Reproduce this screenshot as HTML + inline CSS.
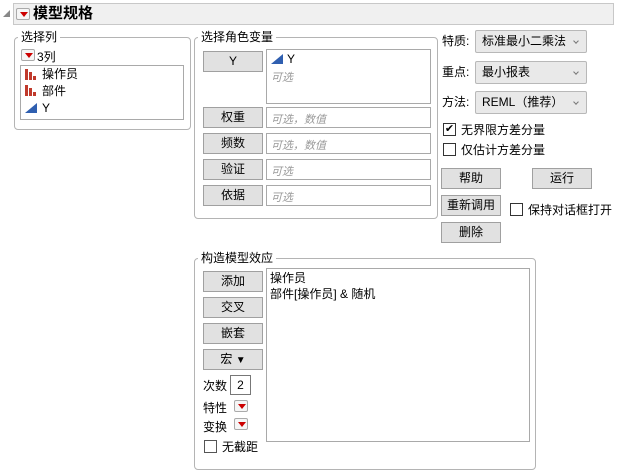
<!DOCTYPE html>
<html><head><meta charset="utf-8"><style>
*{box-sizing:border-box;margin:0;padding:0}
body{width:617px;height:471px;background:#fff;font-family:"Liberation Sans","Noto Sans CJK SC",sans-serif;font-size:12px;color:#000;position:relative;overflow:hidden}
.a{position:absolute}
.grp{position:absolute;border:1px solid #b4b4b4;border-radius:4px}
.gl{position:absolute;background:#fff;padding:0 3px;font-size:12px;line-height:14px}
.btn{position:absolute;background:#e1e1e1;border:1px solid #a0a0a0;text-align:center;font-size:12px;line-height:18px}
.box{position:absolute;background:#fff;border:1px solid #a9a9a9}
.ph{color:#9a9a9a;font-style:italic;font-size:11px;position:absolute;left:4px}
.dd{position:absolute;background:#e9e9e9;border:1px solid #b8b8b8;border-radius:2px;font-size:12px;line-height:21px;padding-left:6px}
.dd:after{content:"";position:absolute;right:8px;top:8px;width:3px;height:3px;border-right:1px solid #777;border-bottom:1px solid #777;transform:rotate(45deg)}
.cb{position:absolute;width:13px;height:13px;border:1px solid #333;background:#fff}
.rb{position:absolute;width:14px;height:12px;border:1px solid #aaa;border-radius:2px;background:#f6f6f6}
.rb:after{content:"";position:absolute;left:3px;top:3px;border-left:4px solid transparent;border-right:4px solid transparent;border-top:5px solid #c00}
.bar{position:absolute;width:3px;background:#c0392b;bottom:0}
</style></head><body>
<div class="a" style="left:3px;top:10px;width:0;height:0;border-left:7px solid transparent;border-bottom:7px solid #888"></div>
<div class="a" style="left:13px;top:3px;width:601px;height:22px;background:#f0f0f0;border:1px solid #c8c8c8"></div>
<div class="rb" style="left:16px;top:8px"></div>
<div class="a" style="left:33px;top:4px;font-size:15px;font-weight:bold;line-height:20px">模型规格</div>

<div class="grp" style="left:14px;top:37px;width:177px;height:93px"></div>
<div class="gl" style="left:18px;top:30px">选择列</div>
<div class="rb" style="left:21px;top:49px"></div>
<div class="a" style="left:37px;top:50px;line-height:14px">3列</div>
<div class="box" style="left:20px;top:65px;width:164px;height:55px"></div>
<div class="a" style="left:25px;top:68px;width:12px;height:12px"><div class="bar" style="left:0;height:11px"></div><div class="bar" style="left:4px;height:8px"></div><div class="bar" style="left:8px;height:4px"></div></div>
<div class="a" style="left:42px;top:67px;line-height:15px">操作员</div>
<div class="a" style="left:25px;top:84px;width:12px;height:12px"><div class="bar" style="left:0;height:11px"></div><div class="bar" style="left:4px;height:8px"></div><div class="bar" style="left:8px;height:4px"></div></div>
<div class="a" style="left:42px;top:84px;line-height:15px">部件</div>
<svg class="a" style="left:25px;top:103px" width="12" height="10"><polygon points="0,10 12,10 12,0" fill="#2f5fb0"/></svg>
<div class="a" style="left:42px;top:101px;line-height:15px">Y</div>

<div class="grp" style="left:194px;top:37px;width:244px;height:182px"></div>
<div class="gl" style="left:198px;top:30px">选择角色变量</div>
<div class="btn" style="left:203px;top:51px;width:60px;height:21px">Y</div>
<div class="box" style="left:266px;top:49px;width:165px;height:55px"></div>
<svg class="a" style="left:271px;top:54px" width="12" height="10"><polygon points="0,10 12,10 12,0" fill="#2f5fb0"/></svg>
<div class="a" style="left:287px;top:52px;line-height:15px">Y</div>
<div class="ph" style="left:271px;top:69px">可选</div>
<div class="btn" style="left:203px;top:107px;width:60px;height:21px">权重</div>
<div class="box" style="left:266px;top:107px;width:165px;height:21px"><span class="ph" style="top:3px">可选，数值</span></div>
<div class="btn" style="left:203px;top:133px;width:60px;height:21px">频数</div>
<div class="box" style="left:266px;top:133px;width:165px;height:21px"><span class="ph" style="top:3px">可选，数值</span></div>
<div class="btn" style="left:203px;top:159px;width:60px;height:21px">验证</div>
<div class="box" style="left:266px;top:159px;width:165px;height:21px"><span class="ph" style="top:3px">可选</span></div>
<div class="btn" style="left:203px;top:185px;width:60px;height:21px">依据</div>
<div class="box" style="left:266px;top:185px;width:165px;height:21px"><span class="ph" style="top:3px">可选</span></div>

<div class="a" style="left:442px;top:32px">特质:</div>
<div class="dd" style="left:475px;top:30px;width:112px;height:23px">标准最小二乘法</div>
<div class="a" style="left:442px;top:63px">重点:</div>
<div class="dd" style="left:475px;top:61px;width:112px;height:23px">最小报表</div>
<div class="a" style="left:442px;top:93px">方法:</div>
<div class="dd" style="left:475px;top:91px;width:112px;height:23px">REML（推荐）</div>
<div class="cb" style="left:443px;top:123px;font-size:11px;line-height:11px;text-align:center">✔</div>
<div class="a" style="left:461px;top:121px">无界限方差分量</div>
<div class="cb" style="left:443px;top:143px"></div>
<div class="a" style="left:461px;top:141px">仅估计方差分量</div>
<div class="btn" style="left:441px;top:168px;width:60px;height:21px">帮助</div>
<div class="btn" style="left:532px;top:168px;width:60px;height:21px">运行</div>
<div class="btn" style="left:441px;top:195px;width:60px;height:21px">重新调用</div>
<div class="cb" style="left:510px;top:203px"></div>
<div class="a" style="left:528px;top:201px">保持对话框打开</div>
<div class="btn" style="left:441px;top:222px;width:60px;height:21px">删除</div>

<div class="grp" style="left:194px;top:258px;width:342px;height:212px"></div>
<div class="gl" style="left:198px;top:251px">构造模型效应</div>
<div class="btn" style="left:203px;top:271px;width:60px;height:21px">添加</div>
<div class="btn" style="left:203px;top:297px;width:60px;height:21px">交叉</div>
<div class="btn" style="left:203px;top:323px;width:60px;height:21px">嵌套</div>
<div class="btn" style="left:203px;top:349px;width:60px;height:21px">宏 <span style="font-size:10px">▼</span></div>
<div class="box" style="left:266px;top:268px;width:264px;height:174px"></div>
<div class="a" style="left:270px;top:270px;line-height:16px">操作员<br>部件[操作员] &amp; 随机</div>
<div class="a" style="left:203px;top:377px">次数</div>
<div class="box" style="left:230px;top:375px;width:21px;height:20px;border-color:#777;text-align:center;line-height:18px">2</div>
<div class="a" style="left:203px;top:399px">特性</div>
<div class="rb" style="left:234px;top:400px"></div>
<div class="a" style="left:203px;top:418px">变换</div>
<div class="rb" style="left:234px;top:418px"></div>
<div class="cb" style="left:204px;top:440px;border-color:#555"></div>
<div class="a" style="left:222px;top:438px">无截距</div>
</body></html>
